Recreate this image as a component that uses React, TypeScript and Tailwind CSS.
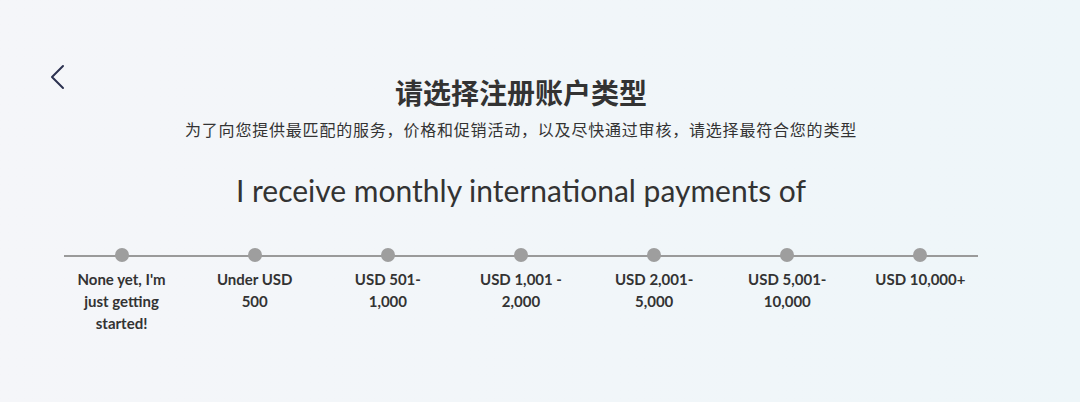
const ranges = [
  ["None yet, I'm", "just getting", "started!"],
  ["Under USD", "500"],
  ["USD 501-", "1,000"],
  ["USD 1,001 -", "2,000"],
  ["USD 2,001-", "5,000"],
  ["USD 5,001-", "10,000"],
  ["USD 10,000+"],
];

export default function App() {
  return (
    <div className="w-[1080px] h-[402px] overflow-hidden bg-gradient-to-r from-[#f5f6f9] to-[#eef6f9] text-[#333]">
      <div className="relative pt-[73px]">
        {/* back button */}
        <button className="absolute left-[46px] top-[62px] w-[24px] h-[30px] flex items-center justify-center">
          <svg width="18" height="26" viewBox="0 0 18 26" fill="none">
            <path d="M14 2 L3 13 L14 24" stroke="#2c3250" strokeWidth="2" strokeLinecap="round" strokeLinejoin="round" />
          </svg>
        </button>

        <div className="ml-[64px] w-[914px] flex flex-col items-center">
          <h1 className="text-[28px] leading-[38px] font-bold font-['Noto_Sans_CJK_SC',sans-serif]">
            请选择注册账户类型
          </h1>
          <p className="mt-[6px] text-[16px] leading-[24px] tracking-[0.8px] font-['Noto_Sans_CJK_SC',sans-serif]">
            为了向您提供最匹配的服务，价格和促销活动，以及尽快通过审核，请选择最符合您的类型
          </p>
          <p className="mt-[29px] text-[30px] leading-[40px] font-['Lato',sans-serif] text-[#333]">
            I receive monthly international payments of
          </p>
        </div>

        {/* range slider */}
        <div className="mt-[38px]">
          <div className="relative ml-[64px] w-[914px] h-[14px]">
            <div className="absolute left-0 right-0 top-[7px] h-[2px] bg-[#9a9a9a]" />
          </div>
          <div className="-mt-[14px] ml-[55px] w-[932px] grid grid-cols-7">
            {ranges.map((lines, i) => (
              <div key={i} className="flex flex-col items-center">
                <div className="relative w-[14px] h-[14px] rounded-full bg-[#9e9e9e]" />
                <div className="mt-[6px] text-center text-[15px] leading-[22px] font-bold font-['Lato',sans-serif] text-[#333]">
                  {lines.map((l) => (
                    <div key={l}>{l}</div>
                  ))}
                </div>
              </div>
            ))}
          </div>
        </div>
      </div>
    </div>
  );
}
